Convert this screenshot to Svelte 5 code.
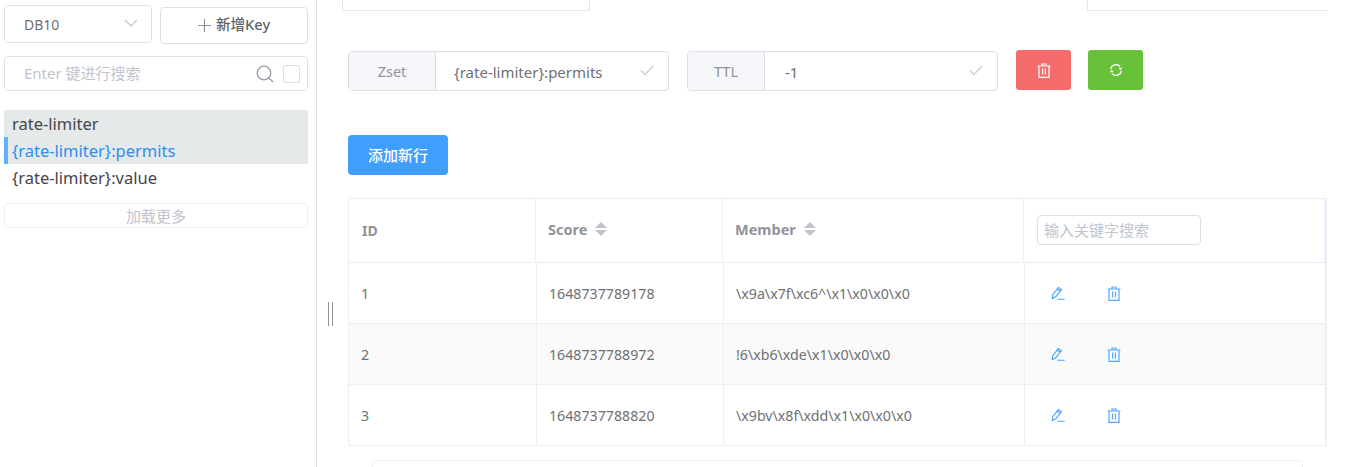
<script>
	const keys = [
		{ name: 'rate-limiter', group: true },
		{ name: '{rate-limiter}:permits', group: true, active: true },
		{ name: '{rate-limiter}:value' }
	];

	const rows = [
		{ id: 1, score: '1648737789178', member: '\\x9a\\x7f\\xc6^\\x1\\x0\\x0\\x0' },
		{ id: 2, score: '1648737788972', member: '!6\\xb6\\xde\\x1\\x0\\x0\\x0' },
		{ id: 3, score: '1648737788820', member: '\\x9bv\\x8f\\xdd\\x1\\x0\\x0\\x0' }
	];
</script>

{#snippet check()}
	<svg class="check" viewBox="0 0 14 14" width="14" height="14"><path d="M1 7.5 5 11.5 13 3" /></svg>
{/snippet}

{#snippet trash()}
	<svg class="trash" viewBox="0 0 14 15" width="14" height="15">
		<path d="M0.5 3H13.5M5 3V1H9V3M2 3V14.4H12V3M5.6 5.5V11.5M8.4 5.5V11.5" />
	</svg>
{/snippet}

{#snippet sorter()}
	<span class="sorter"><i class="up"></i><i class="down"></i></span>
{/snippet}

<div class="shell">
	<aside>
		<div class="top">
			<div class="select">
				<span>DB10</span>
				<svg viewBox="0 0 14 8" width="14" height="8"><path d="M1 1 7 7 13 1" /></svg>
			</div>
			<button class="new-key">
				<svg viewBox="0 0 13 13" width="13" height="13"><path d="M6.5 0V13M0 6.5H13" /></svg>
				<span>新增Key</span>
			</button>
		</div>

		<div class="search">
			<span class="hint">Enter 键进行搜索</span>
			<svg viewBox="0 0 18 18" width="18" height="18"><circle cx="8" cy="8" r="6.8" /><path d="M13 13 17 17" /></svg>
			<span class="box"></span>
		</div>

		<ul class="keys">
			{#each keys as key}
				<li class:group={key.group} class:active={key.active}>{key.name}</li>
			{/each}
		</ul>

		<button class="more">加载更多</button>
	</aside>

	<main>
		<div class="tabs">
			<div class="tab-left"></div>
			<div class="tab-right"></div>
		</div>

		<div class="form">
			<div class="field type">
				<span class="label">Zset</span>
				<span class="value">{'{rate-limiter}:permits'}</span>
				{@render check()}
			</div>
			<div class="field ttl">
				<span class="label">TTL</span>
				<span class="value">-1</span>
				{@render check()}
			</div>
			<button class="square danger" aria-label="delete">{@render trash()}</button>
			<button class="square success" aria-label="refresh">
				<svg viewBox="0 0 14 14" width="14" height="14">
					<path d="M1.6 6A5.5 5.5 0 0 1 11 3.4M12.4 8A5.5 5.5 0 0 1 3 10.6" />
					<path class="fill" d="M9.4 4.8H13.4L11.4 7.4ZM0.6 9.2H4.6L2.6 6.6Z" />
				</svg>
			</button>
		</div>

		<button class="add">添加新行</button>

		<div class="table">
			<div class="row head">
				<div class="cell">ID</div>
				<div class="cell raised">Score {@render sorter()}</div>
				<div class="cell raised">Member {@render sorter()}</div>
				<div class="cell"><div class="filter">输入关键字搜索</div></div>
			</div>
			{#each rows as row, i}
				<div class="row body" class:striped={i === 1}>
					<div class="cell">{row.id}</div>
					<div class="cell">{row.score}</div>
					<div class="cell">{row.member}</div>
					<div class="cell actions">
						<svg class="pen" viewBox="0 0 14 14" width="14" height="14">
							<path d="M1.2 12.6 1.8 8.6 7.4 1.4 10.4 3.6 4.8 10.8ZM6.2 3 9.2 5.2M6.6 13.2H13.6" />
						</svg>
						{@render trash()}
					</div>
				</div>
			{/each}
		</div>

		<div class="pager"></div>
	</main>

	<div class="grip"></div>
</div>

<style>
	:global(body) {
		margin: 0;
		background: #fff;
	}

	.shell {
		display: flex;
		position: relative;
		width: 1347px;
		height: 467px;
		overflow: hidden;
		font-family: "Noto Sans", "Noto Sans CJK SC", sans-serif;
		font-size: 14px;
		color: #6e7074;
	}

	button {
		font: inherit;
		padding: 0;
		background: #fff;
		cursor: pointer;
	}

	aside {
		box-sizing: border-box;
		flex: none;
		width: 317px;
		padding: 5px 8px 0 4px;
		border-right: 1px solid #dcdfe6;
	}

	.top {
		display: flex;
		align-items: flex-start;
		gap: 8px;
	}

	.select {
		box-sizing: border-box;
		display: flex;
		align-items: center;
		justify-content: space-between;
		width: 148px;
		height: 38px;
		padding: 0 13px 0 19px;
		border: 1px solid #dcdfe6;
		border-radius: 4px;
	}

	.select svg {
		margin-bottom: 2px;
	}

	.select svg path {
		fill: none;
		stroke: #c0c4cc;
		stroke-width: 1.2;
	}

	.new-key {
		display: flex;
		align-items: center;
		justify-content: center;
		gap: 5px;
		box-sizing: border-box;
		width: 148px;
		height: 37px;
		margin-top: 2px;
		padding-bottom: 1px;
		border: 1px solid #dcdfe6;
		border-radius: 4px;
		color: #606266;
	}

	.new-key span {
		margin-bottom: 3px;
		font-size: 14.6px;
		font-weight: 500;
	}

	.new-key svg path {
		stroke: #909399;
		stroke-width: 1.2;
	}

	.search {
		box-sizing: border-box;
		display: flex;
		align-items: center;
		height: 35px;
		margin-top: 12px;
		padding: 0 7px 0 19px;
		border: 1px solid #dcdfe6;
		border-radius: 4px;
	}

	.hint {
		flex: 1;
		padding-bottom: 2px;
		font-size: 15px;
		color: #c0c4cc;
	}

	.search svg {
		margin-right: 9px;
	}

	.search svg circle,
	.search svg path {
		fill: none;
		stroke: #9a9ea6;
		stroke-width: 1.3;
	}

	.box {
		box-sizing: border-box;
		width: 17px;
		height: 18px;
		border: 1px solid #dcdfe6;
		border-radius: 2px;
	}

	.keys {
		list-style: none;
		margin: 19px 0 0;
		padding: 0;
		font-size: 16.5px;
		color: #44464a;
	}

	.keys li {
		box-sizing: border-box;
		height: 27px;
		padding-left: 8px;
		line-height: 27px;
		white-space: nowrap;
	}

	.keys li.group {
		background: #e6e9e9;
	}

	.keys li.active {
		padding-left: 4px;
		border-left: 4px solid #66b1ff;
		color: #2b8ff2;
	}

	.more {
		display: block;
		box-sizing: border-box;
		width: 100%;
		height: 25px;
		margin-top: 12px;
		border: 1px solid #ebeef5;
		border-radius: 4px;
		font-size: 15px;
		color: #c0c4cc;
		line-height: 22px;
	}

	main {
		flex: 1;
		min-width: 0;
		padding-left: 25px;
	}

	.tabs {
		display: flex;
		justify-content: space-between;
		width: 985px;
		height: 11px;
	}

	.tab-left,
	.tab-right {
		box-sizing: border-box;
		height: 11px;
		border: 1px solid #e4e7ed;
		border-top: none;
	}

	.tab-left {
		width: 248px;
	}

	.tab-right {
		width: 240px;
		border-right: none;
	}

	.form {
		display: flex;
		align-items: flex-start;
		margin-top: 39px;
		margin-left: 6px;
	}

	.field {
		box-sizing: border-box;
		display: flex;
		align-items: center;
		height: 40px;
		margin-top: 1px;
		border: 1px solid #dcdfe6;
		border-radius: 4px;
	}

	.field.type {
		width: 321px;
	}

	.field.ttl {
		width: 311px;
		margin-left: 18px;
		margin-right: 18px;
	}

	.label {
		box-sizing: border-box;
		flex: none;
		align-self: stretch;
		display: flex;
		align-items: center;
		justify-content: center;
		padding-bottom: 1px;
		background: #f5f7fa;
		border-right: 1px solid #dcdfe6;
		border-radius: 3px 0 0 3px;
		font-size: 14.5px;
		color: #909399;
	}

	.type .label {
		width: 87px;
	}

	.ttl .label {
		width: 77px;
	}

	.value {
		flex: 1;
		padding-top: 2px;
		padding-left: 18px;
		font-size: 15px;
		white-space: nowrap;
	}

	.ttl .value {
		padding-left: 20px;
	}

	.check {
		margin-right: 14px;
		margin-bottom: 2px;
	}

	.check path {
		fill: none;
		stroke: #c6c9cf;
		stroke-width: 1.2;
	}

	.square {
		display: flex;
		align-items: center;
		justify-content: center;
		width: 55px;
		height: 40px;
		border: none;
		border-radius: 3px;
	}

	.danger {
		background: #f56c6c;
	}

	.danger .trash path {
		stroke: #fff;
	}

	.success {
		margin-left: 17px;
		background: #67c23a;
	}

	.success path {
		fill: none;
		stroke: #fff;
		stroke-width: 1.3;
	}

	.success path.fill {
		fill: #fff;
		stroke: none;
	}

	.trash path {
		fill: none;
		stroke: #53a8ff;
		stroke-width: 1.2;
	}

	.add {
		display: block;
		width: 100px;
		height: 40px;
		margin: 44px 0 0 6px;
		padding-bottom: 2px;
		border: none;
		border-radius: 4px;
		background: #409eff;
		font-size: 15px;
		font-weight: 500;
		color: #fff;
	}

	.table {
		box-sizing: border-box;
		width: 979px;
		height: 248px;
		margin: 23px 0 0 6px;
		border: 1px solid #ebeef5;
		border-right-width: 2px;
	}

	.row {
		display: grid;
		border-bottom: 1px solid #ebeef5;
	}

	.row:last-child {
		border-bottom: none;
	}

	.head {
		grid-template-columns: 187px 187px 301px 301px;
		height: 63px;
		font-weight: 700;
		color: #909399;
	}

	.body {
		grid-template-columns: 188px 187px 301px 300px;
		height: 60px;
		font-size: 14.2px;
	}

	.striped {
		background: #fafafa;
	}

	.cell {
		box-sizing: border-box;
		display: flex;
		align-items: center;
		padding-left: 12px;
		border-right: 1px solid #ebeef5;
		white-space: nowrap;
	}

	.cell:last-child {
		border-right: none;
	}

	.head .cell:first-child {
		padding-left: 13px;
	}

	.head .cell:last-child {
		padding-left: 13px;
		border-right: 1px solid #ebeef5;
	}

	.raised {
		padding-bottom: 3px;
		font-size: 14.5px;
		gap: 8px;
	}

	.sorter {
		display: inline-flex;
		flex-direction: column;
		gap: 2px;
	}

	.sorter i {
		display: block;
		width: 0;
		height: 0;
		border-left: 6px solid transparent;
		border-right: 6px solid transparent;
	}

	.sorter .up {
		border-bottom: 6px solid #c0c4cc;
	}

	.sorter .down {
		border-top: 6px solid #c0c4cc;
	}

	.filter {
		box-sizing: border-box;
		width: 164px;
		height: 30px;
		margin-bottom: 2px;
		padding-left: 6px;
		border: 1px solid #dcdfe6;
		border-radius: 4px;
		font-size: 15px;
		font-weight: 400;
		color: #c0c4cc;
		line-height: 28px;
	}

	.actions {
		gap: 42px;
		padding-left: 26px;
	}

	.pen path {
		fill: none;
		stroke: #409eff;
		stroke-width: 1.1;
	}

	.pager {
		box-sizing: border-box;
		width: 931px;
		height: 20px;
		margin: 14px 0 0 30px;
		border: 1px solid #ebeef5;
		border-radius: 4px;
	}

	.grip {
		position: absolute;
		left: 328px;
		top: 302px;
		width: 3px;
		height: 24px;
		border-left: 1px solid #909399;
		border-right: 1px solid #909399;
	}
</style>
